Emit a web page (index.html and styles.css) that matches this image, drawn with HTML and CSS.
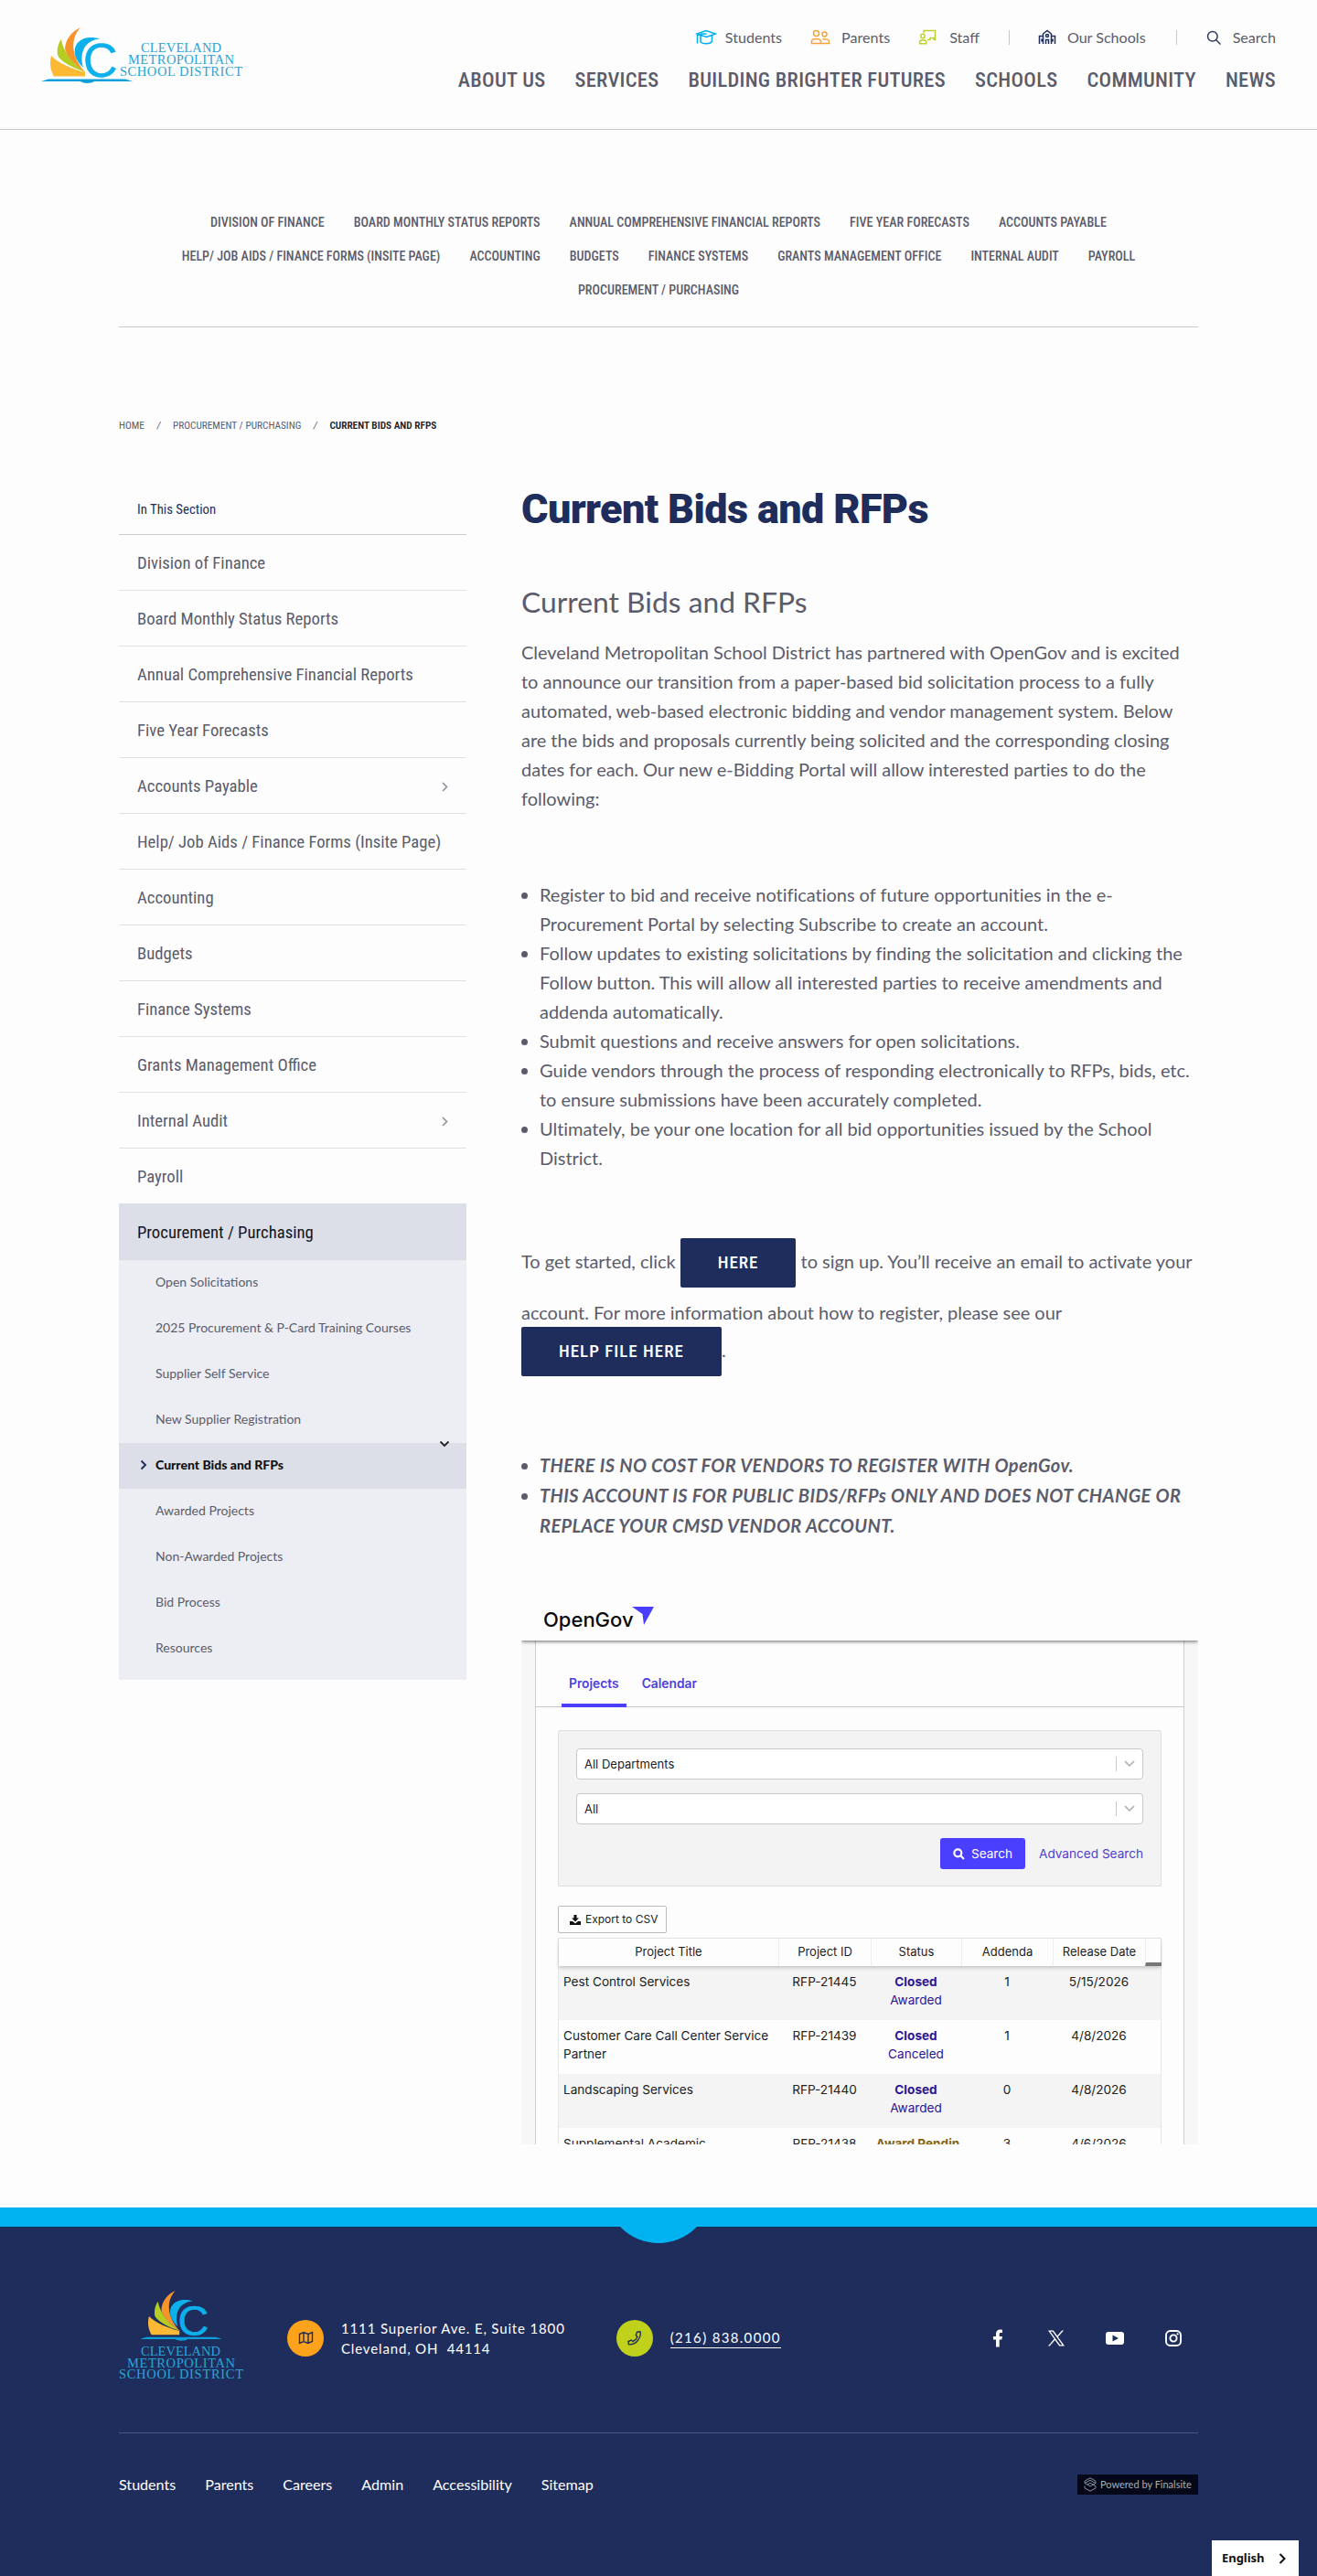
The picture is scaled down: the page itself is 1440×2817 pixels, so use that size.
FILE: index.html
```html
<!DOCTYPE html>
<html lang="en">
<head>
  <meta charset="UTF-8">
  <meta name="viewport" content="width=device-width, initial-scale=1.0">
  <title>Current Bids and RFPs</title>
  <link rel="stylesheet" href="styles.css">
</head>
<body>
  <!-- Shared logo mark -->
  <svg class="sprite" width="0" height="0" aria-hidden="true">
    <symbol id="mark" viewBox="0 0 100 64">
      <path fill="#fdb933" d="M11 33C19 41 33 47 48 51V55.500H14C10 49 9 41 11 33Z"/>
      <path fill="#b5cc22" d="M22 15C24 28 34 42 49 51C36 47 20 39 18 32C17 25 19 19 22 15Z"/>
      <path fill="#f7932b" d="M43 2C32 14 32 33 48 51C37 43 27 33 26 25C27 14 34 6 43 2Z"/>
      <path fill="#0db0ea" d="M64 14.500C49 16 41 28 46 46C37 38 34 27 39 20C45 12 56 12 64 14.500Z"/>
      <text x="46" y="56" class="mark-c">C</text>
      <path fill="#0d9fdc" d="M0 61L8 58.500H92L100 61H58C55 63.500 46 63.500 43 61Z"/>
    </symbol>
  </svg>

  <header class="header">
    <a class="logo" href="#">
      <svg width="222" height="64" viewBox="0 0 222 64">
        <use href="#mark" x="0" y="0" width="100" height="64"/>
        <text class="logo-text" x="109" y="29" textLength="88">CLEVELAND</text>
        <text class="logo-text" x="95" y="42" textLength="116">METROPOLITAN</text>
        <text class="logo-text" x="86" y="55" textLength="134">SCHOOL DISTRICT</text>
      </svg>
    </a>
    <div class="header-right">
      <nav class="utility">
        <a href="#" class="u-students"><svg width="24" height="18" viewBox="0 0 24 18" stroke="#00aeef"><path d="M2 5L12 1.500L22.500 5L12.500 8.500ZM2.500 5V15.500M6 7V14C9 16.500 16 16.500 18.500 13.500V7M12.500 5H8C7 5 6 6 6 7"/></svg><span>Students</span></a>
        <a href="#" class="u-parents"><svg width="22" height="18" viewBox="0 0 22 18" stroke="#f9a13a"><circle cx="6.500" cy="4.500" r="3"/><circle cx="15.500" cy="5.500" r="2.500"/><path d="M1.500 15.500V13.500C1.500 11 3 10.500 6.500 10.500S11.500 11 11.500 13.500V15.500ZM11.500 15.500H20.500V13.500C20.500 11 18 10.500 13.500 10.800"/></svg><span>Parents</span></a>
        <a href="#" class="u-staff"><svg width="20" height="18" viewBox="0 0 20 18" stroke="#bed12f"><path d="M6 4V1.500H18.500V11.500H17M10 11.500H13M13 12V9.500H17V12"/><circle cx="5" cy="7.500" r="2.200"/><path d="M1.500 15.800V14C1.500 12 3 11.700 5 11.700S8.800 12 8.800 14V15.800Z"/></svg><span>Staff</span></a>
        <a href="#" class="u-schools"><svg width="20" height="18" viewBox="0 0 20 18" stroke="#1e2d5c"><path d="M1.500 16V7.500H5M18.500 16V7.500H15M5.500 16V5L10 1.500L14.500 5V16M8.500 16V11.500H11.500V16M4 10.500V13.500M16 10.500V13.500"/><circle cx="10" cy="7" r="1.500"/></svg><span>Our Schools</span></a>
        <a href="#" class="u-search"><svg width="17" height="17" viewBox="0 0 17 17" stroke="#2d3a5e"><circle cx="6.800" cy="6.800" r="5.300"/><path d="M10.800 10.800L15.500 15.500"/></svg><span>Search</span></a>
      </nav>
      <nav class="main-nav">
        <a href="#">About Us</a>
        <a href="#">Services</a>
        <a href="#">Building Brighter Futures</a>
        <a href="#">Schools</a>
        <a href="#">Community</a>
        <a href="#">News</a>
      </nav>
    </div>
  </header>

  <div class="container">
    <nav class="section-nav">
      <a href="#">Division of Finance</a>
      <a href="#">Board Monthly Status Reports</a>
      <a href="#">Annual Comprehensive Financial Reports</a>
      <a href="#">Five Year Forecasts</a>
      <a href="#">Accounts Payable</a>
      <a href="#">Help/ Job Aids / Finance Forms (Insite Page)</a>
      <a href="#">Accounting</a>
      <a href="#">Budgets</a>
      <a href="#">Finance Systems</a>
      <a href="#">Grants Management Office</a>
      <a href="#">Internal Audit</a>
      <a href="#">Payroll</a>
      <a href="#">Procurement / Purchasing</a>
    </nav>

    <nav class="breadcrumb">
      <a href="#">Home</a><i>/</i><a href="#">Procurement / Purchasing</a><i>/</i><strong>Current Bids and RFPs</strong>
    </nav>

    <div class="layout">
      <aside class="side">
        <div class="side-title">In This Section</div>
        <a href="#">Division of Finance</a>
        <a href="#">Board Monthly Status Reports</a>
        <a href="#">Annual Comprehensive Financial Reports</a>
        <a href="#">Five Year Forecasts</a>
        <a href="#">Accounts Payable<svg width="7" height="11" viewBox="0 0 7 11"><path d="M1 1L5.500 5.500L1 10"/></svg></a>
        <a href="#">Help/ Job Aids / Finance Forms (Insite Page)</a>
        <a href="#">Accounting</a>
        <a href="#">Budgets</a>
        <a href="#">Finance Systems</a>
        <a href="#">Grants Management Office</a>
        <a href="#">Internal Audit<svg width="7" height="11" viewBox="0 0 7 11"><path d="M1 1L5.500 5.500L1 10"/></svg></a>
        <a href="#">Payroll</a>
        <a href="#" class="active">Procurement / Purchasing</a>
        <div class="side-sub">
          <svg class="toggle" width="12" height="8" viewBox="0 0 12 8"><path d="M1.500 1.500L6 6L10.500 1.500"/></svg>
          <a href="#">Open Solicitations</a>
          <a href="#">2025 Procurement &amp; P-Card Training Courses</a>
          <a href="#">Supplier Self Service</a>
          <a href="#">New Supplier Registration</a>
          <a href="#" class="current"><svg width="8" height="12" viewBox="0 0 8 12"><path d="M1.500 1.500L6 6L1.500 10.500"/></svg>Current Bids and RFPs</a>
          <a href="#">Awarded Projects</a>
          <a href="#">Non-Awarded Projects</a>
          <a href="#">Bid Process</a>
          <a href="#">Resources</a>
        </div>
      </aside>

      <main class="content">
        <h1>Current Bids and RFPs</h1>
        <h2>Current Bids and RFPs</h2>
        <p>Cleveland Metropolitan School District has partnered with OpenGov and is excited to announce our transition from a paper-based bid solicitation process to a fully automated, web-based electronic bidding and vendor management system. Below are the bids and proposals currently being solicited and the corresponding closing dates for each. Our new e-Bidding Portal will allow interested parties to do the following:</p>
        <ul class="steps">
          <li>Register to bid and receive notifications of future opportunities in the e-Procurement Portal by selecting Subscribe to create an account.</li>
          <li>Follow updates to existing solicitations by finding the solicitation and clicking the Follow button. This will allow all interested parties to receive amendments and addenda automatically.</li>
          <li>Submit questions and receive answers for open solicitations.</li>
          <li>Guide vendors through the process of responding electronically to RFPs, bids, etc. to ensure submissions have been accurately completed.</li>
          <li>Ultimately, be your one location for all bid opportunities issued by the School District.</li>
        </ul>
        <p class="signup">To get started, click <a href="#" class="btn">Here</a> to sign up. You’ll receive an email to activate your account. For more information about how to register, please see our <a href="#" class="btn">Help File Here</a>.</p>
        <ul class="notes">
          <li>THERE IS NO COST FOR VENDORS TO REGISTER WITH OpenGov.</li>
          <li>THIS ACCOUNT IS FOR PUBLIC BIDS/RFPs ONLY AND DOES NOT CHANGE OR REPLACE YOUR CMSD VENDOR ACCOUNT.</li>
        </ul>

        <!-- OpenGov portal -->
        <div class="portal">
          <div class="portal-head"><span>OpenGov</span><svg width="24" height="20" viewBox="0 0 24 20"><path fill="#4b3fff" d="M0 0H24L13 20L11.500 8Z"/></svg></div>
          <div class="portal-body">
            <div class="tabs"><a href="#" class="on">Projects</a><a href="#">Calendar</a></div>
            <div class="filters">
              <div class="select">All Departments<i></i><svg width="12" height="8" viewBox="0 0 12 8"><path d="M1 1L6 6L11 1"/></svg></div>
              <div class="select">All<i></i><svg width="12" height="8" viewBox="0 0 12 8"><path d="M1 1L6 6L11 1"/></svg></div>
              <div class="actions">
                <a href="#" class="search-btn"><svg width="13" height="13" viewBox="0 0 13 13" fill="none" stroke="#fff" stroke-width="2.200"><circle cx="5.300" cy="5.300" r="4"/><path d="M8.300 8.300L12 12"/></svg>Search</a>
                <a href="#" class="adv">Advanced Search</a>
              </div>
            </div>
            <a href="#" class="export"><svg width="12" height="11" viewBox="0 0 12 11"><path d="M4.500 0H7.500V3.500H10L6 7.500L2 3.500H4.500ZM0 7H3L6 9.500L9 7H12V11H0Z"/></svg>Export to CSV</a>
            <div class="table">
              <div class="row head"><span>Project Title</span><span>Project ID</span><span>Status</span><span>Addenda</span><span>Release Date</span><span class="scroll"></span></div>
              <div class="row"><span>Pest Control Services</span><span>RFP-21445</span><span class="closed"><b>Closed</b><br>Awarded</span><span>1</span><span>5/15/2026</span></div>
              <div class="row"><span>Customer Care Call Center Service Partner</span><span>RFP-21439</span><span class="closed"><b>Closed</b><br>Canceled</span><span>1</span><span>4/8/2026</span></div>
              <div class="row"><span>Landscaping Services</span><span>RFP-21440</span><span class="closed"><b>Closed</b><br>Awarded</span><span>0</span><span>4/8/2026</span></div>
              <div class="row"><span>Supplemental Academic</span><span>RFP-21438</span><span class="pending"><b>Award Pendin</b></span><span>3</span><span>4/6/2026</span></div>
            </div>
          </div>
        </div>
      </main>
    </div>
  </div>

  <footer class="footer">
    <div class="container">
      <div class="footer-top">
        <a class="footer-logo" href="#">
          <svg width="137" height="100" viewBox="0 0 137 100">
            <use href="#mark" x="23" y="0" width="90" height="58"/>
            <text class="logo-text" x="24" y="73" textLength="87">CLEVELAND</text>
            <text class="logo-text" x="9" y="86" textLength="118">METROPOLITAN</text>
            <text class="logo-text" x="0" y="98" textLength="136">SCHOOL DISTRICT</text>
          </svg>
        </a>
        <div class="contact address">
          <i class="dot orange"><svg width="17" height="15" viewBox="0 0 17 15"><path d="M1.500 3.500L6 1.500L11 3.500L15.500 1.500V11.500L11 13.500L6 11.500L1.500 13.500ZM6 1.500V11.500M11 3.500V13.500"/></svg></i>
          <span>1111 Superior Ave. E, Suite 1800<br>Cleveland, OH&nbsp; 44114</span>
        </div>
        <div class="contact phone">
          <i class="dot green"><svg width="16" height="16" viewBox="0 0 16 16"><path d="M10.500 1.200L14 .8C15.500 8 9 15.500 1.500 14.800L1 11.500L4.300 10L6 11.500C8.500 10.500 10 9 11 6.500L9.300 4.800Z"/></svg></i>
          <a href="#">(216) 838.0000</a>
        </div>
        <div class="social">
          <a href="#"><svg width="20" height="20" viewBox="0 0 20 20"><path d="M8 19.500V11.500H5V8H8V5.500C8 2 10 .5 12.500 .5L15 .7V4H13.300C12 4 11.700 4.700 11.700 5.700V8H15L14.300 11.500H11.700V19.500Z"/></svg></a>
          <a href="#"><svg width="20" height="20" viewBox="0 0 20 20"><path fill-rule="evenodd" d="M1 1.500H6.800L11 7.300L16.200 1.500H18L11.800 8.500L19 18.500H13.200L8.500 12L2.700 18.500H1L7.700 10.800ZM3.500 2.800L14 17.200H16.500L6 2.800Z"/></svg></a>
          <a href="#"><svg width="20" height="20" viewBox="0 0 20 20"><path fill-rule="evenodd" d="M3 3H17Q20 3 20 6V14Q20 17 17 17H3Q0 17 0 14V6Q0 3 3 3ZM7.500 6.500V13.500L14 10Z"/></svg></a>
          <a href="#"><svg width="20" height="20" viewBox="0 0 20 20"><rect x="2" y="2" width="16" height="16" rx="4.500" fill="none" stroke="#fff" stroke-width="1.900"/><circle cx="10" cy="10" r="3.600" fill="none" stroke="#fff" stroke-width="1.900"/><circle cx="14.600" cy="5.400" r="1.100"/></svg></a>
        </div>
      </div>
      <div class="footer-bottom">
        <nav><a href="#">Students</a><a href="#">Parents</a><a href="#">Careers</a><a href="#">Admin</a><a href="#">Accessibility</a><a href="#">Sitemap</a></nav>
        <a href="#" class="badge"><svg width="14" height="16" viewBox="0 0 14 16"><path d="M7 .8L13 4.200V6.500L7 10L4 8.200L7 6.300L13 9.800V11.800L7 15.200L1 11.800V9.500M13 6.500L7 3.300L1 6.500V4.200L7 .8M1 6.500L4 8.200"/></svg><span>Powered by Finalsite</span></a>
      </div>
    </div>
  </footer>
  <div class="lang">English<svg width="8" height="12" viewBox="0 0 8 12"><path d="M1.500 1L6.500 6L1.500 11"/></svg></div>
</body>
</html>
```
FILE: styles.css
```css
:root {
  --navy: #1e2d5c;
  --cyan: #00b2ef;
  --text: #5b5c6b;
  --body-font: Lato, sans-serif;
  --cond-font: Roboto, sans-serif;
}
* { box-sizing: border-box; margin: 0; padding: 0; }
body { background: #fdfdfd; color: var(--text); font-family: var(--body-font); font-size: 20px; line-height: 32px; letter-spacing: -.03px; position: relative; }
a { color: inherit; text-decoration: none; }
svg { display: block; fill: none; flex: none; }
.sprite { position: absolute; }
.container { width: 1180px; margin: 0 auto; }

/* Header */
.header { height: 142px; border-bottom: 1px solid #c6c9cd; padding: 28px 45px 0; display: flex; justify-content: space-between; }
.logo-text { font-family: "Liberation Serif", serif; font-size: 14.500px; fill: #2aa5d6; }
.mark-c { font-family: "Liberation Sans", sans-serif; font-size: 52px; fill: #0db0ea; stroke: #0db0ea; stroke-width: .6; }
.utility { display: flex; justify-content: flex-end; height: 26px; align-items: center; font-size: 16.100px; line-height: 26px; letter-spacing: 0; }
.utility a { display: flex; align-items: center; }
.utility svg { stroke-width: 1.500; }
.u-students svg { margin-right: 9px; }
.u-parents { margin-left: 31px; }
.u-parents svg { margin-right: 12px; }
.u-staff { margin-left: 31px; }
.u-staff svg { margin-right: 14px; }
.utility .u-schools { margin-left: 32px; border-left: 1px solid #c4c6cc; padding-left: 31px; height: 16px; }
.u-schools svg { margin-right: 12px; }
.utility .u-search { margin-left: 33px; border-left: 1px solid #c4c6cc; padding-left: 32px; height: 16px; }
.u-search svg { margin-right: 12px; }
.main-nav { display: flex; gap: 32px; justify-content: flex-end; margin-top: 18px; font: 500 22.500px/30px var(--cond-font); font-stretch: 75%; letter-spacing: .3px; text-transform: uppercase; }

/* Section nav */
.section-nav { display: flex; flex-wrap: wrap; justify-content: center; column-gap: 32px; padding: 83px 50px 21px; border-bottom: 1px solid #c6c9cd; font: 500 14.100px/37px var(--cond-font); font-stretch: 75%; letter-spacing: 0; text-transform: uppercase; }
.breadcrumb { display: flex; height: 20px; margin-top: 98px; font: 400 11.300px/20px var(--cond-font); font-stretch: 75%; letter-spacing: 0; text-transform: uppercase; }
.breadcrumb i { width: 31px; text-align: center; }
.breadcrumb strong { color: #222; font-weight: 600; }

.layout { display: grid; grid-template-columns: 380px 740px; column-gap: 60px; margin-top: 52px; }

/* Sidebar */
.side > a, .side-title { display: flex; align-items: center; justify-content: space-between; height: 61px; padding: 2px 20px 0; border-bottom: 1px solid #e0e1e6; font: 400 18.700px/30px var(--cond-font); font-stretch: 75%; letter-spacing: 0; }
.side .side-title { height: 57px; font-size: 14.800px; color: var(--navy); border-color: #c9ccd1; }
.side > a svg { stroke: #8d8e98; stroke-width: 1.500; }
.side > a.active { background: #dcdfe7; color: #14141c; border-color: #dcdfe7; }
.side-sub { background: #edeef3; padding-bottom: 9px; position: relative; letter-spacing: 0; }
.side-sub a { display: flex; align-items: center; height: 50px; padding: 0 0 2px 40px; font-size: 14px; }
.side-sub .current { background: #dcdfe7; color: #111; font-weight: 900; padding-left: 23px; }
.current svg { stroke: #22305f; stroke-width: 2; margin-right: 9px; }
.toggle { position: absolute; right: 18px; top: 197px; stroke: #222; stroke-width: 1.800; z-index: 1; }

/* Content */
h1 { font: 900 45px/58px Roboto, sans-serif; letter-spacing: -.64px; color: var(--navy); }
h2 { font-size: 31.800px; font-weight: 400; line-height: 40px; margin: 52px 0 19px; letter-spacing: 0; }
ul { padding-left: 20px; }
.steps { margin-top: 73px; }
.signup { margin-top: 72px; }
.btn { display: inline-block; background: var(--navy); color: #fff; border-radius: 2px; padding: 0 41px; margin-bottom: 11px; font: 500 19px/54px var(--cond-font); font-stretch: 75%; letter-spacing: 1px; text-transform: uppercase; }
.notes { margin-top: 70px; font-weight: 700; font-style: italic; line-height: 33px; letter-spacing: .39px; }

/* Portal */
.portal { margin-top: 60px; height: 600px; overflow: hidden; background: #f7f7f7; font: 13.600px/20px Inter, sans-serif; letter-spacing: 0; color: #222; }
.portal-head { display: flex; background: #fdfdfd; height: 49px; padding: 12px 0 0 24px; position: relative; box-shadow: 0 1px 4px rgba(0,0,0,.6); }
.portal-head span { font-size: 22px; line-height: 28px; color: #0a0a0a; font-weight: 500; margin-right: -2px; }
.portal-body { margin: 0 15px; background: #fdfdfd; border: 1px solid #cfcfcf; border-width: 0 1px; height: 560px; }
.tabs { display: flex; height: 73px; border-bottom: 1px solid #c8c8c8; padding: 37px 0 0 28px; color: #4d3fe0; font-weight: 600; font-size: 13.800px; }
.tabs a { height: 36px; padding: 0 8px; }
.tabs .on { border-bottom: 4px solid #4b3fff; margin-right: 9px; }
.filters { margin: 25px 24px 0; border: 1px solid #dedede; border-radius: 2px; background: #f3f3f3; height: 171px; padding: 19px; }
.select { display: flex; align-items: center; background: #fff; border: 1px solid #c8c8c8; border-radius: 4px; height: 34px; margin-bottom: 15px; padding: 0 8px 1px; font-size: 13px; }
.select i { margin-left: auto; width: 1px; height: 16px; background: #c8c8c8; margin-right: 8px; }
.select svg { stroke: #bbb; stroke-width: 1.800; }
.actions { display: flex; justify-content: flex-end; align-items: center; gap: 15px; color: #4d3fd0; }
.search-btn { display: flex; align-items: center; gap: 7px; height: 34px; padding: 0 14px; background: #4b3fff; color: #fff; border-radius: 3px; }
.export { display: flex; align-items: center; gap: 5px; width: 119px; height: 30px; margin: 21px 0 5px 24px; padding-left: 12px; border: 1px solid #bbb; border-radius: 2px; font-size: 12px; }
.export svg { fill: #111; }
.table { margin: 0 24px; border: 1px solid #e6e6e6; width: 660px; }
.row { display: grid; grid-template-columns: 240px 101px 99px 100px 101px 18px; height: 59px; padding-top: 7px; text-align: center; }
.row span:first-child { text-align: left; padding-left: 5px; }
.row:nth-child(even) { background: #f4f4f4; }
.row.head { height: 30px; padding: 0; line-height: 29px; font-size: 13px; position: relative; box-shadow: 0 2px 4px rgba(0,0,0,.2); background: #fdfdfd; }
.row.head span { border-left: 1px solid #eee; }
.row.head span:first-child { text-align: center; padding: 0; border: 0; }
.row.head .scroll { border-bottom: 4px solid #777; }
.closed { color: #2a1695; }
.pending { color: #8a6416; white-space: nowrap; padding-left: 4px; }

/* Footer */
.footer { margin-top: 69px; background: var(--navy); border-top: 21px solid var(--cyan); height: 403px; color: #fff; position: relative; overflow: hidden; }
.footer::before { content: ""; position: absolute; left: 50%; top: -98px; width: 116px; height: 116px; margin-left: -58px; border-radius: 50%; background: var(--cyan); }
.footer-top { display: flex; align-items: center; height: 226px; padding-top: 18px; border-bottom: 1px solid #4b5985; }
.footer-logo { margin-top: -8px; }
.contact { display: flex; align-items: center; font-size: 15px; line-height: 22px; letter-spacing: .85px; }
.address { margin-left: 47px; }
.phone { margin-left: 56px; letter-spacing: 1.330px; }
.phone a { border-bottom: 1px solid #fff; }
.dot { display: flex; align-items: center; justify-content: center; width: 40px; height: 40px; border-radius: 50%; margin-right: 19px; }
.dot svg { stroke: var(--navy); stroke-width: 1.400; }
.orange { background: #fda31b; }
.green { background: #c0d11c; }
.social { display: flex; gap: 44px; margin-left: auto; padding-right: 17px; }
.social svg { fill: #fff; }
.footer-bottom { display: flex; justify-content: space-between; align-items: center; height: 112px; }
.footer-bottom nav { display: flex; gap: 32px; font-size: 16.100px; letter-spacing: 0; }
.badge { display: flex; align-items: center; gap: 4px; width: 132px; height: 22px; padding-left: 7px; background: #040819; color: #a9adb8; font-size: 11px; letter-spacing: 0; }
.badge svg { stroke: #8d92a0; }
.lang { position: absolute; right: 20px; bottom: 0; width: 95px; height: 39px; background: #fff; color: #111; display: flex; align-items: center; justify-content: space-between; padding: 0 14px 0 11px; font: 700 13px/39px "Noto Sans", sans-serif; }
.lang svg { stroke: #111; stroke-width: 2; }
```
